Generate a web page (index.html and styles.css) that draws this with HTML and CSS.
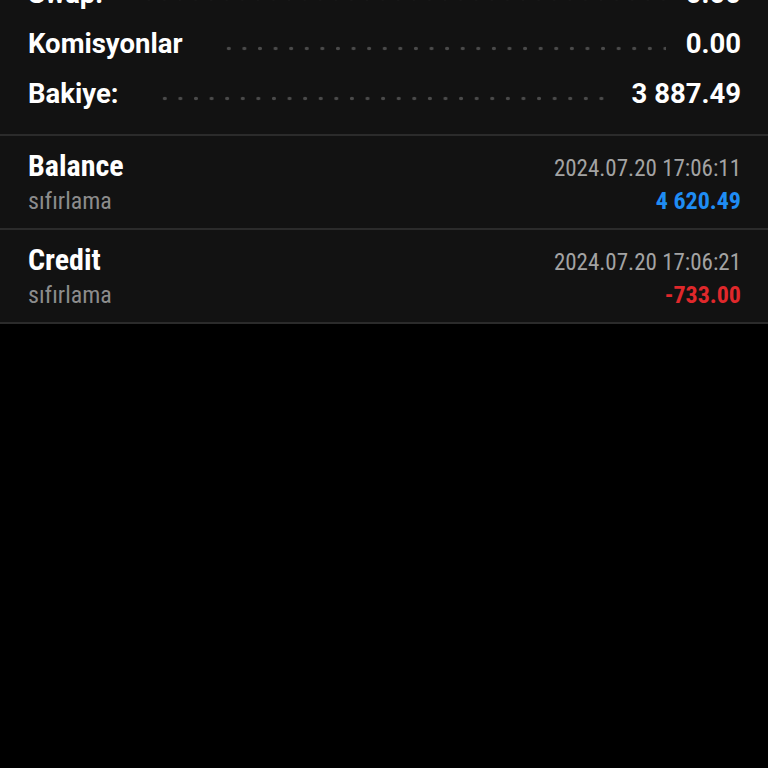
FILE: index.html
```html
<!DOCTYPE html>
<html lang="tr">
<head>
    <meta charset="UTF-8">
    <meta name="viewport" content="width=device-width, initial-scale=1.0">
    <title>Geçmiş</title>
    <link rel="stylesheet" href="styles.css">
</head>
<body>

    <div class="summary">
        <div class="summary-row">
            <span class="summary-label">Swap:</span>
            <span class="leader"></span>
            <span class="summary-value">0.00</span>
        </div>
        <div class="summary-row">
            <span class="summary-label">Komisyonlar</span>
            <span class="leader"></span>
            <span class="summary-value">0.00</span>
        </div>
        <div class="summary-row">
            <span class="summary-label">Bakiye:</span>
            <span class="leader"></span>
            <span class="summary-value">3 887.49</span>
        </div>
    </div>

    <!-- Deal list -->
    <div class="deal">
        <div class="deal-line">
            <span class="deal-title">Balance</span>
            <span class="deal-time">2024.07.20 17:06:11</span>
        </div>
        <div class="deal-line">
            <span class="deal-comment">sıfırlama</span>
            <span class="deal-amount plus">4 620.49</span>
        </div>
    </div>
    <div class="deal">
        <div class="deal-line">
            <span class="deal-title">Credit</span>
            <span class="deal-time">2024.07.20 17:06:21</span>
        </div>
        <div class="deal-line">
            <span class="deal-comment">sıfırlama</span>
            <span class="deal-amount minus">-733.00</span>
        </div>
    </div>

</body>
</html>
```

FILE: styles.css
```css
body {
    margin: 0;
    background-color: #000;
    font-family: Roboto, "Liberation Sans", sans-serif;
    color: #fff;
    height: 768px;
    overflow: hidden;
}

.summary {
    background-color: #121212;
    margin-top: -32px;
    padding: 0 27px 16px 28px;
    border-bottom: 2px solid #2b2b2b;
}

.summary-row {
    display: flex;
    align-items: center;
    height: 50px;
    font-size: 27.5px;
    font-weight: bold;
}

.leader {
    flex: 1;
    height: 5px;
    margin: 11px 20px 0 38px;
    background-image: radial-gradient(circle, #4a4a4a 1.6px, transparent 2.1px);
    background-size: 15.6px 5px;
    background-position: left center;
    background-repeat: repeat-x;
}

.deal {
    background-color: #121212;
    padding: 11px 27px 10px 28px;
    border-bottom: 2px solid #2b2b2b;
    font-family: "Roboto Condensed", "Liberation Sans Narrow", Roboto, sans-serif;
}

.deal-line {
    display: flex;
    justify-content: space-between;
    align-items: baseline;
}

.deal-title {
    font-size: 30px;
    font-weight: bold;
    line-height: 38px;
}

.deal-time {
    font-size: 23px;
    color: #a3a3a3;
}

.deal-comment {
    font-size: 24px;
    line-height: 33px;
    color: #8c8c8c;
}

.deal-amount {
    font-size: 24px;
    font-weight: bold;
}

.plus {
    color: #1f8cf3;
}

.minus {
    color: #e0282b;
}
```
